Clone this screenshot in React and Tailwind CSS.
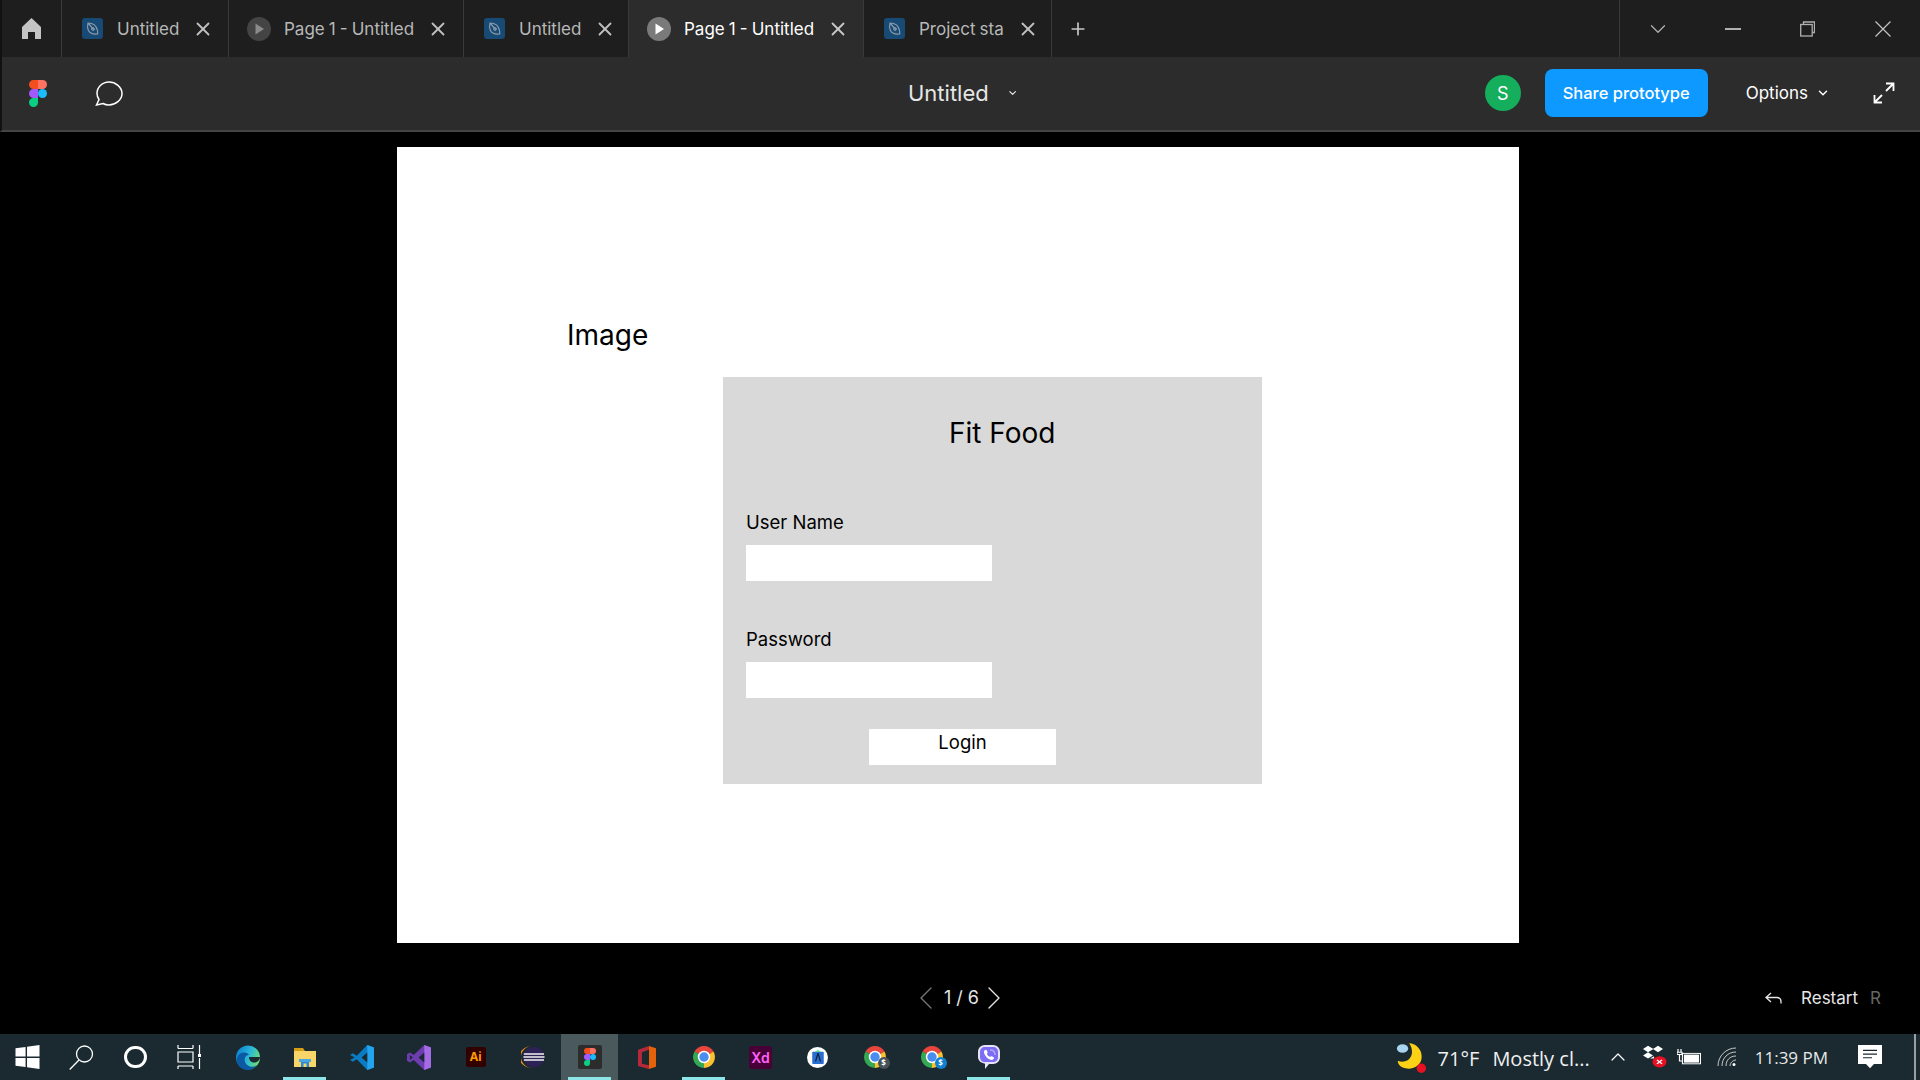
import { X, Plus, ChevronDown, ChevronLeft, ChevronRight } from 'lucide-react'

const inter = "font-['Inter',sans-serif]"

function LeafTabIcon() {
  return (
    <svg width="21" height="21" viewBox="0 0 21 21" className="shrink-0">
      <rect width="21" height="21" rx="3" fill="#174a75" />
      <path d="M6 5c4.5 0 8.500 2.500 9.500 7.500.3 1.500.2 2.500.2 3.500-4.500.5-8-.5-9.500-4C5.300 10 5.500 7 6 5zM6.500 5.500 12 12" fill="none" stroke="#8a9aa8" strokeWidth="1.200" />
      <circle cx="11" cy="11" r="1.4" fill="none" stroke="#8a9aa8" strokeWidth="1" />
    </svg>
  )
}

function PlayTabIcon({ active }) {
  return (
    <svg width="24" height="24" viewBox="0 0 24 24" className="shrink-0">
      <circle cx="12" cy="12" r="12" fill={active ? '#7a7a7a' : '#444444'} />
      <path d="M8.5 6.5 17 12l-8.500 5.500z" fill={active ? '#ffffff' : '#8a8a8a'} />
    </svg>
  )
}

function Tab({ width, label, kind, active }) {
  const leaf = kind === 'leaf'
  return (
    <div className={`flex items-center h-full border-r border-[#3a3a3a] shrink-0 ${leaf ? 'pl-5' : 'pl-[18px]'} ${width} ${active ? 'bg-[#2c2c2c]' : ''}`}>
      {leaf ? <LeafTabIcon /> : <PlayTabIcon active={active} />}
      <span className={`pt-[2px] text-[17px] leading-none whitespace-nowrap [word-spacing:-0.7px] ${leaf ? 'ml-[14px]' : 'ml-[13px]'} ${active ? 'text-white' : 'text-[#b8b8b8]'}`}>{label}</span>
      <X size={22} strokeWidth={2} className={`ml-[13px] shrink-0 ${active ? 'text-[#c8c8c8]' : 'text-[#c0c0c0]'}`} />
    </div>
  )
}

function FigmaLogo({ w = 18, h = 27 }) {
  return (
    <svg width={w} height={h} viewBox="0 0 38 57" className="shrink-0">
      <path d="M19 28.5a9.5 9.5 0 1 1 19 0 9.5 9.5 0 0 1-19 0z" fill="#1abcfe" />
      <path d="M0 47.5A9.5 9.5 0 0 1 9.5 38H19v9.5a9.5 9.5 0 1 1-19 0z" fill="#0acf83" />
      <path d="M19 0v19h9.5a9.5 9.5 0 1 0 0-19H19z" fill="#ff7262" />
      <path d="M0 9.5A9.5 9.5 0 0 0 9.5 19H19V0H9.5A9.5 9.5 0 0 0 0 9.5z" fill="#f24e1e" />
      <path d="M0 28.5A9.5 9.5 0 0 0 9.5 38H19V19H9.5A9.5 9.5 0 0 0 0 28.5z" fill="#a259ff" />
    </svg>
  )
}

function ChromeIcon({ badge }) {
  return (
    <div className="relative w-[22px] h-[22px]">
      <svg width="22" height="22" viewBox="0 0 22 22">
        <path d="M11 11 1.500 5.500A11 11 0 0 1 20.500 5.500z" fill="#e8453c" />
        <path d="M11 11 20.500 5.500A11 11 0 0 1 11 22z" fill="#fbc02d" />
        <path d="M11 11V22A11 11 0 0 1 1.500 5.500z" fill="#34a853" />
        <circle cx="11" cy="11" r="6.2" fill="#ffffff" />
        <circle cx="11" cy="11" r="4.7" fill="#4a8df0" />
      </svg>
      {badge && (
        <div className={`absolute -right-[4px] -bottom-[1px] w-3 h-3 rounded-full flex items-center justify-center text-[8px] font-bold text-white ${badge}`}>$</div>
      )}
    </div>
  )
}

// taskbar app icons, in slot order
const appIcons = [
  {
    key: 'edge',
    icon: (
      <svg width="24" height="25" viewBox="0 0 24 25">
        <defs>
          <linearGradient id="edgeTop" x1="0" y1="0.2" x2="1" y2="0.6">
            <stop offset="0" stopColor="#0c7fd0" />
            <stop offset="0.55" stopColor="#2bb8d8" />
            <stop offset="1" stopColor="#6ee06e" />
          </linearGradient>
        </defs>
        <circle cx="12" cy="12.5" r="12" fill="url(#edgeTop)" />
        <path d="M1 13C3 7 10 6 13 10 9 10 8 14 9 17c2 5 8 6 12 3-3 4-7 5-9 5C5 25 0 20 1 13z" fill="#0c59a4" />
        <path d="M13 12h11c0 4-4 6-7 5.500-2.500-.5-4-2.500-4-5.500z" fill="#1b2a30" />
      </svg>
    ),
  },
  {
    key: 'explorer',
    line: true,
    icon: (
      <svg width="22" height="19" viewBox="0 0 22 19">
        <path d="M0 0h9l2 3H0z" fill="#d79d15" />
        <rect y="3" width="22" height="16" fill="#f8d568" />
        <path d="M7 12h8v7h-2.500v-3.500h-3V19H7z" fill="#2a8ad4" />
        <rect x="5" y="11" width="12" height="3" fill="#4aa7e4" />
      </svg>
    ),
  },
  {
    key: 'vscode',
    icon: (
      <svg width="24" height="25" viewBox="0 0 25 30" preserveAspectRatio="none">
        <path d="M18 0 25 3v24l-7 3L7 17l-4 3-3-2 5-3-5-3 3-2 4 3z" fill="#0a7cc4" />
        <path d="M18 0 25 3v24l-7 3z" fill="#23a4ec" />
        <path d="M18 9v12l-6-6z" fill="#1b2a30" />
      </svg>
    ),
  },
  {
    key: 'vs',
    icon: (
      <svg width="24" height="25" viewBox="0 0 25 30" preserveAspectRatio="none">
        <path d="M18 0 25 3v24l-7 3L7 18l-4 3-3-2v-8l3-2 4 3z" fill="#6d3cb0" />
        <path d="M18 0 25 3v24l-7 3z" fill="#a36be4" />
        <path d="M18 9v12l-6-6zM3 12v6l3-3z" fill="#1b2a30" />
      </svg>
    ),
  },
  {
    key: 'ai',
    icon: (
      <div className={`w-5 h-5 rounded-[2px] bg-[#330000] flex items-center justify-center text-[#ff9a00] text-[12px] font-bold ${inter}`}>Ai</div>
    ),
  },
  {
    key: 'eclipse',
    icon: (
      <svg width="24" height="22" viewBox="0 0 25 30" preserveAspectRatio="none">
        <path d="M12 0A12 15 0 0 0 12 30 14 15 0 0 1 12 0z" fill="#f7941e" />
        <ellipse cx="13.5" cy="15" rx="11" ry="14" fill="#2c2255" />
        <path d="M3 11h21M2.500 15h22M3 19h21" stroke="#f2f2f2" strokeWidth="2" />
      </svg>
    ),
  },
  {
    key: 'figma',
    active: true,
    line: true,
    icon: (
      <div className="w-6 h-6 rounded-[2px] bg-[#2c2c2c] flex items-center justify-center">
        <FigmaLogo w={12} h={18} />
      </div>
    ),
  },
  {
    key: 'office',
    icon: (
      <svg width="18" height="23" viewBox="0 0 23 30" preserveAspectRatio="none">
        <path d="M14 0 23 3v24l-9 3z" fill="#e5620d" />
        <path d="M14 5v20L5 23V8z" fill="#1b2a30" />
        <path d="M0 5l14-5v5L5 8v15l9 2v5L0 26z" fill="#b5293a" />
      </svg>
    ),
  },
  { key: 'chrome', line: true, icon: <ChromeIcon /> },
  {
    key: 'xd',
    icon: (
      <div className={`w-[23px] h-[23px] rounded-[3px] bg-[#470137] flex items-center justify-center text-[#ff61f6] text-[14px] font-semibold ${inter}`}>Xd</div>
    ),
  },
  {
    key: 'studio',
    icon: (
      <div className="w-[21px] h-[21px] rounded-full bg-white flex items-center justify-center">
        <svg width="12" height="14" viewBox="0 0 14 17">
          <rect y="2" width="14" height="15" rx="1" fill="#2a6fd0" />
          <path d="M3 2 7 0l4 2z" fill="#3ddc84" />
          <path d="M7 4l-3 10M7 4l3 10" stroke="#10233f" strokeWidth="1.5" />
        </svg>
      </div>
    ),
  },
  { key: 'chrome-2', icon: <ChromeIcon badge="bg-[#46525a]" /> },
  { key: 'chrome-3', icon: <ChromeIcon badge="bg-[#1080d0]" /> },
  {
    key: 'viber',
    line: true,
    icon: (
      <svg width="22" height="24" viewBox="0 0 22 24">
        <path d="M7 0h8c4 0 7 3 7 7v5c0 4-3 7-7 7h-4l-4 5v-5.300C3 18 0 15.500 0 12V7c0-4 3-7 7-7z" fill="#e8e4f6" />
        <path d="M7 2h8c3 0 5 2 5 5v5c0 3-2 5-5 5H7c-3 0-5-2-5-5V7c0-3 2-5 5-5z" fill="#7d6cf5" />
        <path d="M12 5c3 0 5 2 5 5" fill="none" stroke="#b3a8f8" strokeWidth="1.5" />
        <path d="M6.500 5.500c1-1 1.800-1 2.300 0l.8 1.700c.2.700-.8 1.100-.6 1.800.5 1.300 1.500 2.300 2.800 2.800.7.200 1.100-.8 1.800-.6l1.700.8c1 .5 1 1.300 0 2.300-1.300 1.300-4.300.5-6.500-1.800S5.200 6.800 6.500 5.500z" fill="#ffffff" />
      </svg>
    ),
  },
]

function App() {
  return (
    <div className={`flex flex-col h-screen overflow-hidden bg-black ${inter}`}>
      {/* Tab strip */}
      <div className="flex h-[57px] shrink-0 bg-[#1e1e1e] border-l-2 border-[#111111]">
        <div className="flex items-center justify-center w-[60px] h-full border-r border-[#3a3a3a] shrink-0">
          <svg width="19" height="21" viewBox="0 0 19 21">
            <path d="M9.5 0 19 9v12h-6v-7H6v7H0V9z" fill="#c4c4c4" />
          </svg>
        </div>
        <Tab width="w-[167px]" label="Untitled" kind="leaf" />
        <Tab width="w-[235px]" label="Page 1 - Untitled" kind="play" />
        <Tab width="w-[165px]" label="Untitled" kind="leaf" />
        <Tab width="w-[235px]" label="Page 1 - Untitled" kind="play" active />
        <Tab width="w-[188px]" label="Project sta" kind="leaf" />
        <div className="flex items-center justify-center w-[52px] shrink-0">
          <Plus size={20} strokeWidth={2} className="text-[#c8c8c8]" />
        </div>
        <div className="flex-1" />
        <div className="flex items-center h-full border-l border-[#3a3a3a] w-[301px] shrink-0 text-[#c4c4c4]">
          <div className="flex items-center justify-center w-[75px]">
            <ChevronDown size={26} strokeWidth={1.1} className="text-[#b4b4b4]" />
          </div>
          <div className="flex items-center justify-center w-[75px]">
            <div className="w-4 h-[2px] bg-[#b0b0b0]" />
          </div>
          <div className="flex items-center justify-center w-[75px]">
            <svg width="15" height="16" viewBox="0 0 15 16" fill="none" stroke="#b0b0b0" strokeWidth="1.3">
              <path d="M3.5 3V1h11v10.500h-2" />
              <rect x=".7" y="3.5" width="11.500" height="11.500" />
            </svg>
          </div>
          <div className="flex items-center justify-center w-[75px]">
            <svg width="16" height="16" viewBox="0 0 16 16" stroke="#c4c4c4" strokeWidth="1.2">
              <path d="M.5.5l15 15M15.500.500l-15 15" />
            </svg>
          </div>
        </div>
      </div>

      {/* Toolbar */}
      <div className="flex items-center h-[75px] pb-px shrink-0 bg-[#2c2c2c] border-l-2 border-b-2 border-l-[#111111] border-b-[#444444]">
        <div className="ml-[27px]"><FigmaLogo /></div>
        <svg width="28" height="25" viewBox="0 0 28 25" fill="none" stroke="#ffffff" strokeWidth="1.5" className="ml-[48px]">
          <path d="M1.500 24 4 18.500C2.800 16.800 2 14.800 2 12.500 2 6 7.500 1 14 1s13 5 13 11.500S20.500 24 14 24c-2.500 0-4.500-.6-6-1.500z" />
        </svg>
        <div className="flex items-center ml-[785px] w-[110px]">
          <span className="text-[22px] leading-none text-[#e6e6e6]">Untitled</span>
          <ChevronDown size={14} strokeWidth={2.5} className="ml-[18px] text-[#e6e6e6]" />
        </div>
        <div className="flex-1" />
        <div className="w-9 h-9 rounded-full bg-[#14ae5c] flex items-center justify-center text-white text-[18px]">S</div>
        <div className="ml-6 flex items-center justify-center w-[163px] h-12 rounded-lg bg-[#0d99ff] text-white text-[16.5px] font-medium">
          Share prototype
        </div>
        <span className="ml-[38px] text-[17px] leading-none text-white">Options</span>
        <ChevronDown size={14} strokeWidth={2.5} className="ml-2 text-white" />
        <svg width="22" height="22" viewBox="0 0 22 22" fill="none" stroke="#ffffff" strokeWidth="1.8" className="ml-[43px] mr-[25px]">
          <path d="M13 1.500h7.500V9M20.500 1.500 13 9M1.500 13v7.500H9M1.500 20.500 9 13" />
        </svg>
      </div>

      {/* Prototype viewer */}
      <main className="flex-1 bg-black pt-[15px]">
        <div className="ml-[397px] w-[1122px] h-[796px] bg-white pt-[171px] pl-[170px]">
          <div className="text-[28px] leading-[34px] text-black">Image</div>
          <div className="mt-[25px] ml-[156px] w-[539px] h-[407px] bg-[#d9d9d9] pt-[39px] pl-[23px] flex flex-col items-start text-black">
            <div className="ml-[203px] text-[28px] leading-[34px]">Fit Food</div>
            <div className="mt-[60px] text-[18.5px] leading-6">User Name</div>
            <input readOnly className="mt-[11px] w-[246px] h-9 bg-white" />
            <div className="mt-[46px] text-[18.5px] leading-6">Password</div>
            <input readOnly className="mt-[11px] w-[246px] h-9 bg-white" />
            <div className="mt-[31px] ml-[123px] w-[187px] h-9 pt-px bg-white text-center text-[18.5px] leading-6">Login</div>
          </div>
        </div>
        <div className="grid grid-cols-3 items-center h-10 mt-[35px] px-10 text-[#e6e6e6]">
          <div />
          <div className="flex items-center justify-center">
            <ChevronLeft size={40} strokeWidth={0.8} className="text-[#777777]" />
            <span className="-ml-[2px] -mr-[5px] text-[18px] leading-none">1 / 6</span>
            <ChevronRight size={40} strokeWidth={0.8} className="text-[#e6e6e6]" />
          </div>
          <div className="flex items-center justify-end -mr-px text-[17px]">
            <svg width="17" height="12" viewBox="0 0 17 12" fill="none" stroke="#e6e6e6" strokeWidth="1.3">
              <path d="M6 1 1 5.500 6 10M1 5.500h11c2.500 0 4 1.500 4 4v2" />
            </svg>
            <span className="ml-[19px] leading-none">Restart</span>
            <span className="ml-3 leading-none text-[#666666]">R</span>
          </div>
        </div>
      </main>

      {/* Windows taskbar */}
      <div className="flex items-center h-[46px] shrink-0 bg-[#1b2a30] text-white font-['Open_Sans',sans-serif]">
        <div className="flex items-center justify-center w-[54px] h-full">
          <svg width="25" height="24" viewBox="0 0 25 25" fill="#ffffff">
            <path d="M0 3.500 10.500 2v10H0zM12 1.800 25 0v12H12zM0 13.500h10.500V23L0 21.500zM12 13.500h13V25l-13-1.800z" />
          </svg>
        </div>
        <div className="flex items-center justify-center w-[54px] h-full">
          <svg width="25" height="25" viewBox="0 0 25 25" fill="none" stroke="#ffffff" strokeWidth="1.3">
            <circle cx="15.5" cy="9" r="8" />
            <path d="M10 15 .7 24.500" />
          </svg>
        </div>
        <div className="flex items-center justify-center w-[54px] h-full">
          <div className="w-[23px] h-[22px] rounded-full border-[3px] border-white" />
        </div>
        <div className="flex items-center justify-center w-[54px] h-full">
          <svg width="24" height="24" viewBox="0 0 24 24" fill="none" stroke="#ffffff" strokeWidth="1.2">
            <path d="M1 3.500h15M1 0v3.500M16 0v3.500M1 7h15v10H1zM1 21h15M1 21v3M16 21v3M22.500 0v9M22.500 13v11" />
            <rect x="21" y="9" width="3" height="3" fill="#ffffff" stroke="none" />
          </svg>
        </div>
        <div className="flex items-center h-full ml-[3px]">
          {appIcons.map(app => (
            <div
              key={app.key}
              className={`relative flex items-center justify-center w-[57px] h-full ${app.active ? 'bg-[#4a5a5c]' : ''}`}
            >
              {app.icon}
              {app.line && <div className="absolute bottom-0 left-[7px] right-[7px] h-[3px] bg-[#8ce6e8]" />}
            </div>
          ))}
        </div>
        <div className="flex-1" />
        <svg width="34" height="32" viewBox="0 0 32 34" className="shrink-0">
          <path d="M14 2c9 1 15 9 13 18-2 7-10 11-17 9-5-1-8-4-8-8 7 3 14-1 15-8 .5-4-1-8-3-11z" fill="#fcd116" />
          <ellipse cx="7" cy="8" rx="6" ry="4.5" fill="#a8d4f0" />
          <circle cx="27" cy="29" r="5" fill="#e81123" />
        </svg>
        <span className="ml-[10px] mt-1 text-[20px] leading-none text-[#f0f0f0]">71°F</span>
        <span className="ml-[13px] mt-1 text-[20px] leading-none text-[#f0f0f0]">Mostly cl...</span>
        <ChevronDown size={24} strokeWidth={1.2} className="ml-4 rotate-180 text-white" />
        <svg width="24" height="24" viewBox="0 0 24 30" preserveAspectRatio="none" className="ml-[13px]">
          <path d="M5 1 10.500 5 5 9 0 5zM15 1 20 5 15 9 10 5zM5 9l5 4-5 4-5-4zM11 17l-4 0 4-3z" fill="#ffffff" />
          <circle cx="16.5" cy="21" r="7" fill="#e81123" />
          <path d="M14 18.500l5 5M19 18.500l-5 5" stroke="#ffffff" strokeWidth="1.5" />
        </svg>
        <svg width="24" height="16" viewBox="0 0 24 20" preserveAspectRatio="none" fill="none" stroke="#ffffff" strokeWidth="1.2" className="ml-[10px]">
          <path d="M1 0v4M4 0v4M0 4h5v3H0zM2.500 7v8h3" />
          <rect x="5.5" y="5.5" width="18" height="13" />
          <rect x="7" y="7" width="15" height="10" fill="#ffffff" stroke="none" />
        </svg>
        <svg width="20" height="20" viewBox="0 0 20 20" fill="none" stroke="#c8c8c8" strokeWidth="1" className="ml-4">
          <path d="M1 19C1 9 9 1 19 1M5 19C5 11 11 5 19 5M9 19c0-6 4-10 10-10M13 19c0-3 3-6 6-6" />
          <circle cx="17" cy="17.5" r="1.5" fill="#ffffff" stroke="none" />
        </svg>
        <span className="ml-[18px] text-[17px] leading-none text-[#e8e8e8]">11:39 PM</span>
        <svg width="24" height="24" viewBox="0 0 24 29" preserveAspectRatio="none" className="ml-[30px]">
          <path d="M0 0h24v23h-8l-4 5-4-5H0z" fill="#ffffff" />
          <path d="M5 6.500h14M5 11h14M5 15.500h9" stroke="#1b2a30" strokeWidth="1.3" />
        </svg>
        <div className="ml-8 mr-1 w-[2px] h-full bg-[#9a9fa2]" />
      </div>
    </div>
  )
}

export default App
